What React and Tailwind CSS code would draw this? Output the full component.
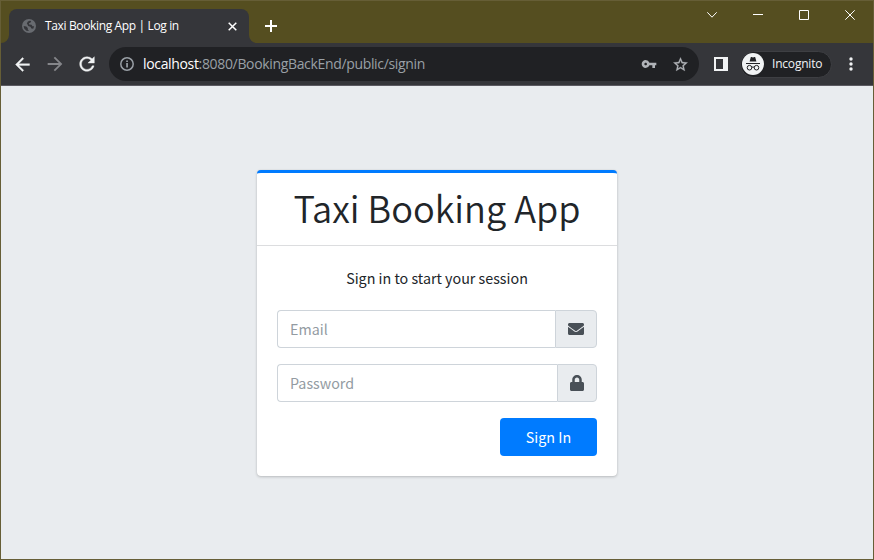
import { MdArrowForward, MdVpnKey } from "react-icons/md";
import { FaEnvelope, FaLock } from "react-icons/fa";

function Globe() {
  return (
    <svg className="ml-0.5 shrink-0" width="14" height="14" viewBox="0 0 14 14">
      <circle cx="7" cy="7" r="7" fill="#686b70" />
      <path d="M7.8 1.8L9.2 2 8.6 3.4 6.9 4.3 7.2 5.6 9.6 5.8 10.4 7.2 12.2 7.2 11.2 9.8 9.4 9.4 8.4 7.8 6.2 7 5.4 5.2 4.8 4.4 5.9 2.4z" fill="#35363a" />
      <path d="M1.6 7L4.4 7.6 5.8 9 5.8 10.4 7 12 4.4 11.8 2.2 9.6z" fill="#35363a" />
    </svg>
  );
}

function InfoIcon() {
  return (
    <svg className="ml-0.5 shrink-0" width="14" height="14" viewBox="0 0 14 14">
      <circle cx="7" cy="7" r="6.2" fill="none" stroke="currentColor" strokeWidth="1.5" />
      <path d="M6.2 6h1.7v4.4H6.2zM6.2 3.5h1.7v1.6H6.2z" fill="currentColor" />
    </svg>
  );
}

function BoldIcon({ d, className }) {
  return (
    <svg className={className} viewBox="0 0 24 24" fill="currentColor" stroke="currentColor" strokeWidth="0.4">
      <path d={d} />
    </svg>
  );
}

const ARROW_BACK = "M20 11H7.83l5.59-5.59L12 4l-8 8 8 8 1.41-1.41L7.83 13H20v-2z";
const REFRESH =
  "M17.65 6.35A7.958 7.958 0 0 0 12 4c-4.42 0-7.99 3.58-7.99 8s3.57 8 7.99 8c3.73 0 6.84-2.55 7.73-6h-2.08A5.99 5.99 0 0 1 12 18c-3.31 0-6-2.69-6-6s2.69-6 6-6c1.66 0 3.14.69 4.22 1.78L13 11h7V4l-2.35 2.35z";
const STAR =
  "M22 9.24l-7.19-.62L12 2 9.19 8.63 2 9.24l5.46 4.73L5.82 21 12 17.27 18.18 21l-1.63-7.03L22 9.24zM12 15.4l-3.76 2.27 1-4.28-3.32-2.88 4.38-.38L12 6.1l1.71 4.04 4.38.38-3.32 2.88 1 4.28L12 15.4z";

function Tab() {
  return (
    <div className="relative mt-2 ml-2 flex h-[34px] w-60 items-center rounded-t-lg bg-[#35363a] pl-[11px] text-white">
      <svg className="absolute bottom-0 -left-2" width="8" height="8" viewBox="0 0 8 8" fill="#35363a">
        <path d="M8 0v8H0a8 8 0 0 0 8-8z" />
      </svg>
      <svg className="absolute -right-2 bottom-0" width="8" height="8" viewBox="0 0 8 8" fill="#35363a">
        <path d="M0 0v8h8a8 8 0 0 1-8-8z" />
      </svg>
      <Globe />
      <span className="ml-[9px] w-[180px] whitespace-nowrap text-[12px] tracking-[-0.36px]">Taxi Booking App | Log in</span>
      <svg className="ml-[3px] shrink-0" width="9" height="9" viewBox="0 0 9 9" stroke="currentColor" strokeWidth="1.5">
        <path d="M.7.7l7.6 7.6M8.3.7L.7 8.3" />
      </svg>
    </div>
  );
}

function TitleBar() {
  return (
    <div className="flex h-[42px] bg-[#554e20]">
      <Tab />
      <svg className="mt-[19px] ml-4" width="12" height="12" viewBox="0 0 12 12" stroke="white" strokeWidth="2">
        <path d="M6 0v12M0 6h12" />
      </svg>
      <div className="mt-[8px] mr-[18px] ml-auto flex h-[11px] items-center gap-9">
        <svg width="10" height="6" viewBox="0 0 10 6" fill="none" stroke="white">
          <path d="M.3.3L5 5.2 9.7.3" />
        </svg>
        <svg width="10" height="1" viewBox="0 0 10 1">
          <path d="M0 0h10v1H0z" fill="white" />
        </svg>
        <svg width="10" height="10" viewBox="0 0 10 10" fill="none" stroke="white">
          <path d="M.5.5h9v9h-9z" />
        </svg>
        <svg width="10" height="10" viewBox="0 0 10 10" fill="none" stroke="white">
          <path d="M.3.3l9.4 9.4M9.7.3L.3 9.7" />
        </svg>
      </div>
    </div>
  );
}

function IncognitoIcon() {
  return (
    <svg className="shrink-0" width="22" height="22" viewBox="0 0 22 22">
      <circle cx="11" cy="11" r="11" fill="#f1f3f4" />
      <path d="M7.6 8.4l1.1-3.9c.1-.4.4-.5.8-.4l1.5.4 1.5-.4c.4-.1.7 0 .8.4l1.1 3.9z" fill="#202124" />
      <path d="M4 10h14v1H4z" fill="#202124" />
      <g fill="none" stroke="#202124" strokeWidth="1">
        <circle cx="7.5" cy="14.7" r="2.3" />
        <circle cx="14.5" cy="14.7" r="2.3" />
        <path d="M9.7 14.3q1.3-.7 2.6 0" />
      </g>
    </svg>
  );
}

function Toolbar() {
  return (
    <div className="flex h-[43px] items-center border-b border-[#5b5a61] bg-[#35363a]">
      <BoldIcon d={ARROW_BACK} className="ml-[11px] size-[21px] text-[#f1f3f4]" />
      <MdArrowForward className="ml-[11px] size-[22px] text-[#85868a]" />
      <BoldIcon d={REFRESH} className="ml-[10px] size-[22px] text-[#f1f3f4]" />
      <div className="ml-[11px] flex h-[34px] w-[590px] items-center rounded-full bg-[#202124] pl-[9px] text-[#9aa0a6]">
        <InfoIcon />
        <div className="mb-px ml-[9px] text-[14px] tracking-[-0.34px]">
          <span className="text-white">localhost</span>:8080/BookingBackEnd/public/signin
        </div>
        <MdVpnKey className="ml-auto size-[16px] text-[#b0b3b8]" />
        <BoldIcon d={STAR} className="mr-[10px] ml-[15px] size-[17px] text-[#b0b3b8]" />
      </div>
      <svg className="ml-[15px]" width="14" height="14" viewBox="0 0 14 14">
        <path d="M0 0h14v14H0zM2 2v10h7V2z" fill="#f1f3f4" fillRule="evenodd" />
      </svg>
      <div className="ml-[12px] flex h-[27px] w-[92px] items-center rounded-full border border-[#3e3f43] bg-[#202124] pl-px">
        <IncognitoIcon />
        <span className="ml-[8px] text-[12px] tracking-[-0.2px] text-[#f1f3f4]">Incognito</span>
      </div>
      <svg className="ml-[17px]" width="4" height="14" viewBox="0 0 4 14" fill="#f1f3f4">
        <circle cx="2" cy="2" r="1.7" />
        <circle cx="2" cy="7" r="1.7" />
        <circle cx="2" cy="12" r="1.7" />
      </svg>
    </div>
  );
}

function Field({ type, label, children }) {
  return (
    <div className="mb-4 flex h-[38px]">
      <input
        type={type}
        placeholder={label}
        className="min-w-0 flex-1 rounded-l border border-r-0 border-[#ced4da] bg-white px-3 text-[14.3px] placeholder:text-[#939ba2]"
      />
      <div className="flex items-center rounded-r border border-[#ced4da] bg-[#e9ecef] px-3 text-[#495057]">{children}</div>
    </div>
  );
}

function LoginCard() {
  return (
    <div className="mt-[84px] h-[306px] w-[360px] rounded border-t-3 border-[#007bff] bg-white font-['Noto_Sans_CJK_SC',sans-serif] text-[#212529] shadow-[0_0_1px_rgba(0,0,0,0.125),0_1px_3px_rgba(0,0,0,0.2)]">
      <h1 className="flex h-[73px] items-center justify-center border-b border-[#dcdddf] pb-1 text-[36.2px] font-[350] whitespace-nowrap">Taxi Booking App</h1>
      <div className="px-5 pt-5">
        <p className="mb-5 h-6 text-center text-[14.3px] leading-6">Sign in to start your session</p>
        <Field type="email" label="Email">
          <FaEnvelope className="size-4" />
        </Field>
        <Field type="password" label="Password">
          <FaLock className="h-4 w-[14px]" />
        </Field>
        <button className="ml-auto flex h-[38px] w-[97px] items-center justify-center rounded bg-[#007bff] text-[14.3px] text-white">Sign In</button>
      </div>
    </div>
  );
}

export default function App() {
  return (
    <div className="flex h-[560px] w-[874px] flex-col border border-[#665e36] bg-[#e9ecef] font-['Open_Sans',sans-serif]">
      <TitleBar />
      <Toolbar />
      <div className="flex justify-center">
        <LoginCard />
      </div>
    </div>
  );
}
